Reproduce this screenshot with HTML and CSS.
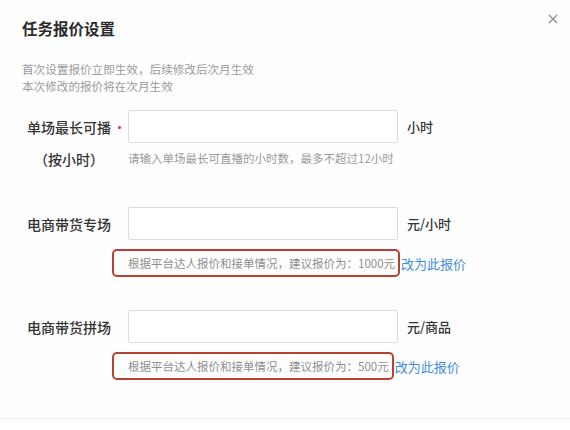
FILE: index.html
```html
<!DOCTYPE html>
<html lang="zh-CN">
<head>
<meta charset="utf-8">
<title>任务报价设置</title>
<link rel="stylesheet" href="styles.css">
</head>
<body>
<div class="dialog">
  <div class="header">
    <div class="title">任务报价设置</div>
    <svg class="close" width="10" height="10" viewBox="0 0 10 10"><path d="M1 1L9 9M9 1L1 9" stroke="#8a8a8a" stroke-width="1.2" fill="none"/></svg>
  </div>
  <div class="subtitle">
    <div>首次设置报价立即生效，后续修改后次月生效</div>
    <div>本次修改的报价将在次月生效</div>
  </div>

  <div class="row first">
    <div class="label">单场最长可播</div>
    <div class="mark"><span class="dot"></span></div>
    <div class="input"></div>
    <div class="unit">小时</div>
  </div>
  <div class="hint-row">
    <div class="label">（按小时）</div>
    <div class="mark"></div>
    <div class="hint">请输入单场最长可直播的小时数，最多不超过12小时</div>
  </div>

  <div class="row second">
    <div class="label">电商带货专场</div>
    <div class="mark"></div>
    <div class="input"></div>
    <div class="unit">元/小时</div>
  </div>
  <div class="suggest-row">
    <div class="suggest">根据平台达人报价和接单情况，建议报价为：1000元</div>
    <a class="apply">改为此报价</a>
  </div>

  <div class="row third">
    <div class="label">电商带货拼场</div>
    <div class="mark"></div>
    <div class="input"></div>
    <div class="unit">元/商品</div>
  </div>
  <div class="suggest-row">
    <div class="suggest">根据平台达人报价和接单情况，建议报价为：500元</div>
    <a class="apply">改为此报价</a>
  </div>
</div>
</body>
</html>
```

FILE: styles.css
```css
html, body {
  margin: 0;
  padding: 0;
  background: #fff;
}
body {
  font-family: "Noto Sans CJK SC", "Noto Sans", sans-serif;
  color: #333;
}
.dialog {
  width: 570px;
  height: 419px;
  box-sizing: border-box;
  padding: 0 12px 0 22px;
  border-bottom: 1px solid #f1f1f1;
  background: #fefefe;
}
.header {
  display: flex;
  justify-content: space-between;
  align-items: flex-start;
  padding-top: 14px;
}
.title {
  margin-top: 3px;
  font-size: 15.5px;
  line-height: 22px;
  font-weight: 700;
  color: #2b2b2b;
}
.close {
  display: block;
}
.subtitle {
  margin-top: 22px;
  font-size: 11.6px;
  line-height: 17px;
  color: #9a9a9a;
}
.row {
  display: flex;
  align-items: center;
  margin-left: 2px;
}
.row.first { margin-top: 15px; }
.row.second { margin-top: 38px; }
.row.third { margin-top: 33px; }
.label {
  width: 90px;
  text-align: center;
  font-size: 14px;
  font-weight: 500;
  color: #333;
}
.mark {
  width: 14px;
  height: 20px;
  display: flex;
  align-items: center;
  justify-content: flex-start;
}
.dot {
  width: 3px;
  height: 3px;
  border-radius: 50%;
  background: #d0304a;
  margin-left: 4px;
  margin-top: 1px;
}
.input {
  width: 270px;
  height: 33px;
  box-sizing: border-box;
  border: 1px solid #dcdcdc;
  border-radius: 2px;
  background: #fff;
}
.unit {
  margin-left: 9px;
  font-size: 13px;
  font-weight: 500;
  color: #333;
}
.hint-row {
  display: flex;
  align-items: center;
  margin-left: 2px;
  margin-top: 6px;
  line-height: 20px;
}
.hint {
  font-size: 11.5px;
  color: #9a9a9a;
  margin-top: -3px;
}
.suggest-row {
  display: flex;
  align-items: center;
  margin-top: 9px;
  margin-left: 90px;
}
.suggest {
  height: 28px;
  box-sizing: border-box;
  border: 2px solid #b8412f;
  border-radius: 5px;
  padding: 0 3px 0 14px;
  font-size: 11.5px;
  line-height: 24px;
  color: #8f8f8f;
}
.apply {
  margin-left: 1px;
  font-size: 13px;
  color: #3d8ee0;
}
```
